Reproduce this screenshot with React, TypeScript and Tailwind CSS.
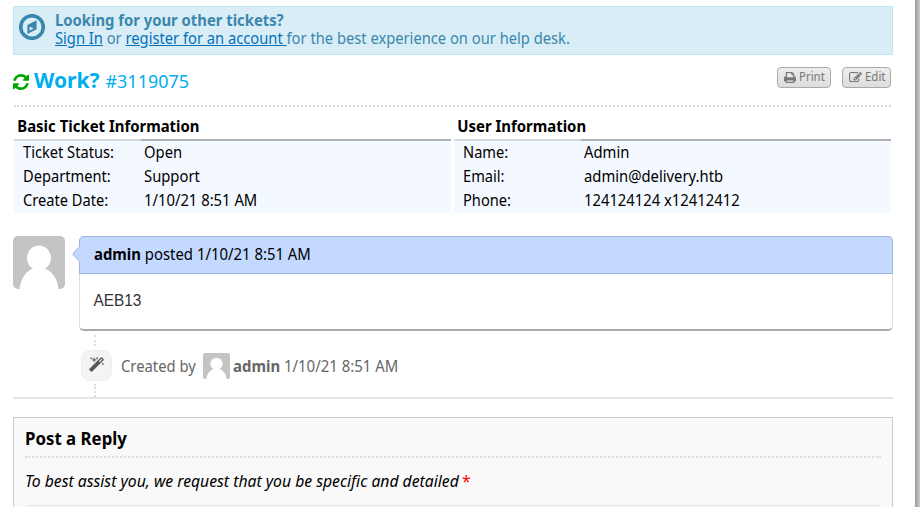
import type { ReactNode } from 'react';

type IconProps = { className?: string };

const Refresh = ({ className }: IconProps) => (
  <svg className={className} viewBox="0 0 1536 1536" fill="currentColor">
    <path d="M1511 928q0 5-1 7-64 268-268 434.5t-478 166.5q-146 0-282.5-55t-243.5-157l-129 129q-19 19-45 19t-45-19-19-45v-448q0-26 19-45t45-19h448q26 0 45 19t19 45-19 45l-137 137q71 66 161 102t187 36q134 0 250-65t186-179q11-17 53-117 8-23 30-23h192q13 0 22.5 9.5t9.5 22.5zm25-800v448q0 26-19 45t-45 19h-448q-26 0-45-19t-19-45 19-45l138-138q-148-137-349-137-134 0-250 65t-186 179q-11 17-53 117-8 23-30 23h-199q-13 0-22.5-9.5t-9.5-22.5v-7q65-268 270-434.5t480-166.5q146 0 284 55.5t245 156.5l130-129q19-19 45-19t45 19 19 45z" />
  </svg>
);

const Printer = ({ className }: IconProps) => (
  <svg className={className} viewBox="0 128 1664 1536" fill="currentColor" stroke="currentColor" strokeWidth="50">
    <path d="M384 1536h896v-256h-896v256zm0-640h896v-384h-160q-40 0-68-28t-28-68v-160h-640v640zm1152 64q0-26-19-45t-45-19-45 19-19 45 19 45 45 19 45-19 19-45zm128 0v416q0 13-9.5 22.5t-22.5 9.5h-224v160q0 40-28 68t-68 28h-960q-40 0-68-28t-28-68v-160h-224q-13 0-22.5-9.5t-9.5-22.5v-416q0-79 56.5-135.5t135.5-56.5h64v-544q0-40 28-68t68-28h672q40 0 88 20t76 48l152 152q28 28 48 76t20 88v256h64q79 0 135.5 56.5t56.5 135.5z" />
  </svg>
);

const Pencil = ({ className }: IconProps) => (
  <svg className={className} viewBox="0 128 1792 1536" fill="currentColor" stroke="currentColor" strokeWidth="30">
    <path d="M888 1184l116-116-152-152-116 116v56h96v96h56zm440-720q-16-16-33 1l-350 350q-17 17-1 33t33-1l350-350q17-17 1-33zm80 594v190q0 119-84.5 203.5t-203.5 84.5h-832q-119 0-203.5-84.5t-84.5-203.5v-832q0-119 84.5-203.5t203.5-84.5h832q63 0 117 25 15 7 18 23 3 17-9 29l-49 49q-14 14-32 8-23-6-45-6h-832q-66 0-113 47t-47 113v832q0 66 47 113t113 47h832q66 0 113-47t47-113v-126q0-13 9-22l64-64q15-15 35-7t20 29zm-96-738l288 288-672 672h-288v-288zm444 132l-92 92-288-288 92-92q28-28 68-28t68 28l152 152q28 28 28 68t-28 68z" />
  </svg>
);

const Wand = ({ className }: IconProps) => (
  <svg className={className} viewBox="0 0 1664 1664" fill="currentColor" stroke="currentColor" strokeWidth="30">
    <path d="M1190 581l293-293-107-107-293 293zm447-293q0 27-18 45l-1286 1286q-18 18-45 18t-45-18l-198-198q-18-18-18-45t18-45l1286-1286q18-18 45-18t45 18l198 198q18 18 18 45zm-1351-190l98 30-98 30-30 98-30-98-98-30 98-30 30-98zm350 162l196 60-196 60-60 196-60-196-196-60 196-60 60-196zm930 478l98 30-98 30-30 98-30-98-98-30 98-30 30-98zm-640-640l98 30-98 30-30 98-30-98-98-30 98-30 30-98z" />
  </svg>
);

const Compass = ({ className }: IconProps) => (
  <svg className={className} viewBox="0 0 26 26">
    <circle cx="13" cy="13" r="11.3" fill="none" stroke="currentColor" strokeWidth="3.6" />
    <path fillRule="evenodd" fill="currentColor" d="M17.600 6.300v9l-9.200 4.600v-9zM10.600 12.600v3.900l4-2z" />
  </svg>
);

const Avatar = ({ className }: IconProps) => (
  <svg className={className} viewBox="0 0 52 53" preserveAspectRatio="none">
    <rect width="52" height="53" fill="#c4c4c4" />
    <ellipse cx="26" cy="22" rx="12" ry="12.4" fill="#fff" />
    <path d="M6.5 53C7.5 42 14 34.500 21 32h10c7 2.500 13.500 10 14.500 21z" fill="#fff" />
  </svg>
);

const Button = ({ icon, children, className }: { icon: ReactNode; children: ReactNode; className: string }) => (
  <button className={`flex h-[21px] items-center rounded-[4px] border border-[#aaa] bg-linear-to-b from-[#eee] to-[#ddd] pl-1.5 text-[13px] leading-[17px] text-[#777] ${className}`}>
    {icon}
    <span className="-mt-[2px] origin-left scale-x-[0.88]">{children}</span>
  </button>
);

const InfoTable = ({ title, rows, className }: { title: string; rows: [string, string][]; className: string }) => (
  <section className={className}>
    <h2 className="h-[25px] w-max origin-left scale-x-[0.932] pl-[3.5px] leading-[24px] font-bold">{title}</h2>
    <div className="flex h-0.5">
      <div className="w-[127px] bg-[#d5d9dd]" />
      <div className="flex-1 bg-[#b0b3b7]" />
    </div>
    <dl className="h-[72px] bg-[#f4f9ff]">
      {rows.map(([k, v]) => (
        <div key={k} className="flex h-6 pl-[8.5px] leading-[22px]">
          <dt className="w-[121.5px] origin-left scale-x-[0.915]">{k}</dt>
          <dd className="origin-left scale-x-[0.925]">{v}</dd>
        </div>
      ))}
    </dl>
  </section>
);

export default function App() {
  return (
    <div className="flex h-[507px] w-[920px] overflow-hidden bg-white font-['Noto_Sans',sans-serif] text-[16px] whitespace-nowrap text-black">
      <main className="w-[915px] shrink-0 pt-1.5 pr-[22px] pl-[13px]">
        <div className="flex h-[49px] border border-[#bce8f1] bg-[#d9edf7] pt-1 pl-[5px] leading-[18px] text-[#3a87ad]">
          <Compass className="mt-[3px] mr-[10px] size-[26px]" />
          <div>
            <div className="w-max origin-left scale-x-[0.926] font-bold">Looking for your other tickets?</div>
            <div className="w-max origin-left scale-x-[0.919]">
              <a className="text-[#0072bc] underline">Sign In</a> or{' '}
              <a className="text-[#0072bc] underline">register for an account </a>for the best experience on our help desk.
            </div>
          </div>
        </div>

        <header className="mr-[2px] ml-px flex h-[52px] items-start border-b-2 border-dotted border-[#d9d9d9] text-[#00aeef]">
          <Refresh className="mt-[19px] -ml-px size-[16px] text-[#00a600]" />
          <h1 className="mt-[12px] ml-[5px] text-[21px] leading-[26px] font-bold">Work?</h1>
          <span className="mt-[13px] ml-1.5 text-[18px] leading-[27px]">#3119075</span>
          <div className="mt-3 ml-auto flex gap-[11px]">
            <Button className="w-[54px]" icon={<Printer className="mr-[3px] h-[11px] w-3 shrink-0" />}>Print</Button>
            <Button className="w-[49px]" icon={<Pencil className="mr-[3px] h-[11px] w-[13px] shrink-0" />}>Edit</Button>
          </div>
        </header>

        <div className="mt-[7px] ml-px flex gap-[3px]">
          <InfoTable className="w-[437px]" title="Basic Ticket Information" rows={[['Ticket Status:', 'Open'], ['Department:', 'Support'], ['Create Date:', '1/10/21 8:51 AM']]} />
          <InfoTable className="w-[437px]" title="User Information" rows={[['Name:', 'Admin'], ['Email:', 'admin@delivery.htb'], ['Phone:', '124124124 x12412412']]} />
        </div>

        <article className="mt-[23px] flex h-[95px]">
          <Avatar className="mr-[14px] h-[53px] w-[52px] rounded-[5px]" />
          <div className="relative flex-1 rounded-[5px] border border-b-2 border-[#ddd] border-b-[#aaa]">
            <div className="-mx-px -mt-px h-[38px] rounded-t-[5px] border border-[#9cb3dd] bg-[#c3d9ff] pl-[13.5px] leading-[34px]">
              <div className="w-max origin-left scale-x-[0.93]"><b>admin</b> posted 1/10/21 8:51 AM</div>
            </div>
            <svg className="absolute top-[9px] -left-2 h-4 w-2" viewBox="0 0 8 16">
              <path d="M8 0L.7 8 8 16z" fill="#c3d9ff" />
              <path d="M7.500 0.500L.7 8l6.800 7.500" fill="none" stroke="#9cb3dd" />
            </svg>
            <p className="w-max origin-left scale-x-[0.96] pt-[17px] pl-[14px] font-['Liberation_Sans',sans-serif] text-[16px] leading-[20px] text-[#333]">AEB13</p>
          </div>
        </article>

        <div className="flex h-[68px] border-b-2 border-[#e5e5e5] pl-[68px] text-[#666]">
          <div className="flex w-[31px] flex-col items-center">
            <div className="mt-1 mr-[3px] h-[11px] border-l-2 border-dotted border-[#ddd]" />
            <div className="mt-1 flex size-[31px] shrink-0 items-center justify-center rounded-[9px] border border-[#eee] bg-[#f4f4f4]">
              <Wand className="mb-0.5 size-[15px] text-[#555]" />
            </div>
            <div className="mt-[3px] mr-[3px] flex-1 border-l-2 border-dotted border-[#ddd]" />
          </div>
          <div className="mt-[22px] ml-[9px] flex h-[27px] items-center leading-[27px]">
            <span className="w-[82px] origin-left scale-x-[0.925]">Created by</span>
            <Avatar className="mr-[3px] mb-px h-[26px] w-[27px] rounded-[2px]" />
            <span className="origin-left scale-x-[0.933]"><b>admin</b> 1/10/21 8:51 AM</span>
          </div>
        </div>

        <section className="mt-[18px] h-[120px] border border-[#ccc] bg-[#f9f9f9] px-[11px] pt-[9px]">
          <h2 className="h-[31px] border-b-2 border-dotted border-[#ddd] text-[18px] leading-[22px] font-bold">
            <span className="inline-block origin-left scale-x-[0.935]">Post a Reply</span>
          </h2>
          <p className="mt-[10px] w-max origin-left scale-x-[0.983] leading-[26px]">
            <em>To best assist you, we request that you be specific and detailed</em> <span className="-ml-px text-[#f00]">*</span>
          </p>
          <div className="mt-[11px] h-4 rounded-t-[3px] border-t border-[#e7e7e7] bg-[#f5f5f5]" />
        </section>
      </main>
      <div className="w-[5px] bg-linear-to-r from-[#999] to-[#ccc]" />
    </div>
  );
}
